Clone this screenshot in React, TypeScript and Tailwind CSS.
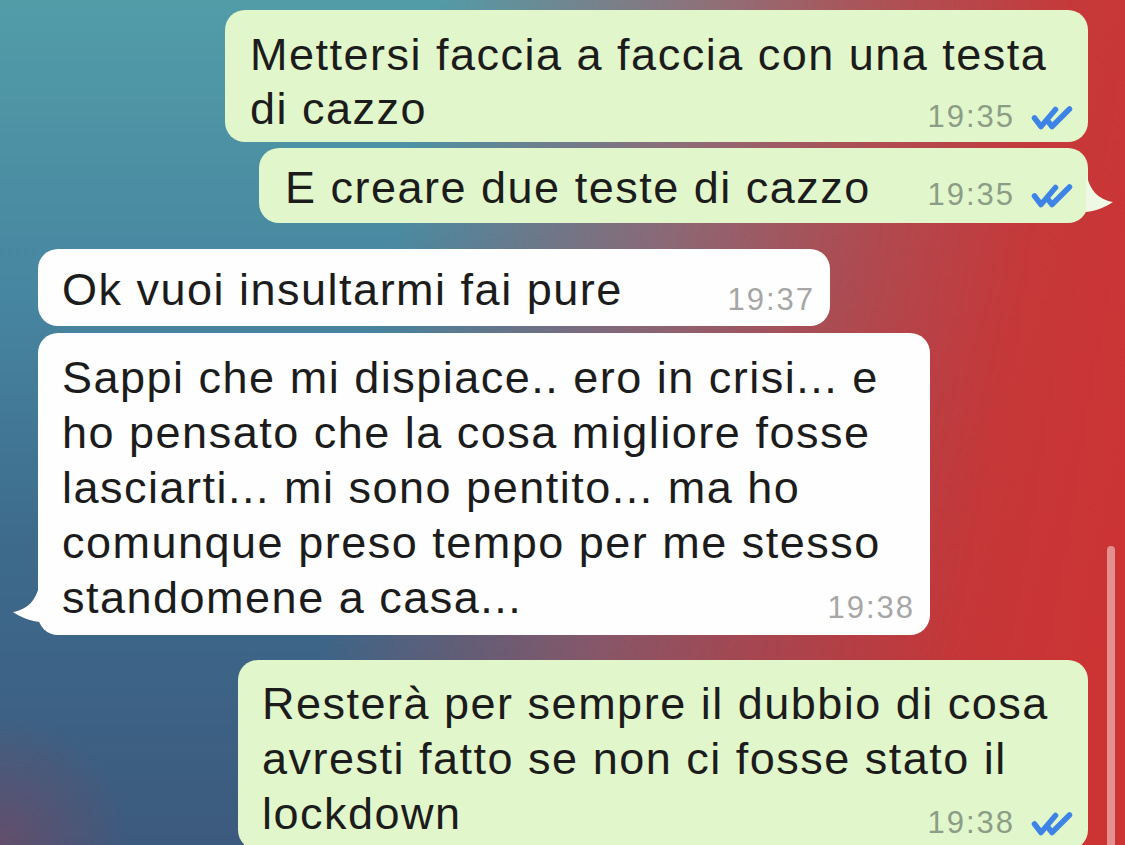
import type { ReactNode } from "react";

const Ticks = () => (
  <svg width="42" height="24" viewBox="0 0 42 24" fill="none" className="ml-[16px] mb-[2px] shrink-0">
    <path d="M3.5 12 L10 20.5 L24.5 3.5" stroke="#3d84e6" strokeWidth="5.5" strokeLinecap="round" strokeLinejoin="round" />
    <path d="M17.5 16 L21 20.5 L38.5 3" stroke="#3d84e6" strokeWidth="5.5" strokeLinecap="round" strokeLinejoin="round" />
  </svg>
);

const Time = ({ t, out }: { t: string; out?: boolean }) => (
  <div className="flex items-end">
    <span
      className={
        out
          ? "text-[31px] leading-[30px] tracking-[2px] text-[#8c9d87]"
          : "text-[31px] leading-[30px] tracking-[2px] text-[#a6a6a6]"
      }
    >
      {t}
    </span>
    {out && <Ticks />}
  </div>
);

const Text = ({ children, lh }: { children: ReactNode; lh?: string }) => (
  <p className={(lh ?? "leading-[55px]") + " whitespace-nowrap text-[45px] tracking-[1.5px]"}>{children}</p>
);

const App = () => {
  return (
    <div className="relative h-[845px] w-[1125px] overflow-hidden font-['Liberation_Sans',Arial,sans-serif] text-[#1c1c1c] bg-[radial-gradient(circle_at_0%_100%,rgba(125,70,95,0.6)_0px,rgba(125,70,95,0)_130px),linear-gradient(100deg,rgba(205,52,52,0)_34%,rgba(195,75,80,0.55)_56%,rgba(200,60,62,0.75)_68%,rgba(204,52,52,0.95)_84%,#cc3434_95%),linear-gradient(to_bottom,#529ca8_0%,#4786a0_35%,#3d6a8b_65%,#3c5a7e_100%)]">
      <div className="flex flex-col pt-[10px]">
        {/* outgoing 1 */}
        <div className="self-end mr-[37px] flex w-[863px] flex-col rounded-[20px] bg-[#e1f6ca] pl-[25px] pr-[15px] pt-[18px] pb-[10px]">
          <Text lh="leading-[54px]">
            Mettersi faccia a faccia con una testa
            <br />
            di cazzo
          </Text>
          <div className="self-end -mt-[34px]">
            <Time t="19:35" out />
          </div>
        </div>

        {/* outgoing 2 */}
        <div className="relative self-end mr-[37px] mt-[6px] flex w-[829px] items-end justify-between rounded-[20px] bg-[#e1f6ca] pl-[26px] pr-[15px] pt-[13px] pb-[8px]">
          <Text lh="leading-[54px]">E creare due teste di cazzo</Text>
          <div className="mb-[5px]">
            <Time t="19:35" out />
          </div>
          <svg width="28" height="40" viewBox="0 0 28 40" className="absolute right-[-26px] bottom-[10px]">
            <path d="M0 0 C4 18 12 26 27 29 C20 34 10 38 0 39 Z" fill="#eef8e4" />
          </svg>
        </div>

        {/* incoming 1 */}
        <div className="self-start ml-[38px] mt-[26px] flex w-[792px] items-end justify-between rounded-[20px] bg-[#fefefe] pl-[24px] pr-[15px] pt-[14px] pb-[9px]">
          <Text lh="leading-[54px]">Ok vuoi insultarmi fai pure</Text>
          <div className="mb-[2px]">
            <Time t="19:37" />
          </div>
        </div>

        {/* incoming 2 */}
        <div className="relative self-start ml-[38px] mt-[7px] flex w-[892px] flex-col rounded-[20px] bg-[#fefefe] pl-[24px] pr-[15px] pt-[17px] pb-[12px]">
          <Text>
            Sappi che mi dispiace.. ero in crisi... e
            <br />
            ho pensato che la cosa migliore fosse
            <br />
            lasciarti... mi sono pentito... ma ho
            <br />
            comunque preso tempo per me stesso
            <br />
            standomene a casa...
          </Text>
          <div className="self-end -mt-[32px]">
            <Time t="19:38" />
          </div>
          <svg width="28" height="40" viewBox="0 0 28 40" className="absolute left-[-26px] bottom-[12px]">
            <path d="M28 0 C24 18 16 26 1 29 C8 34 18 38 28 39 Z" fill="#ffffff" />
          </svg>
        </div>

        {/* outgoing 3 */}
        <div className="self-end mr-[37px] mt-[25px] flex w-[850px] flex-col rounded-[20px] bg-[#e1f6ca] pl-[24px] pr-[15px] pt-[16px] pb-[12px]">
          <Text>
            Resterà per sempre il dubbio di cosa
            <br />
            avresti fatto se non ci fosse stato il
            <br />
            lockdown
          </Text>
          <div className="self-end -mt-[33px]">
            <Time t="19:38" out />
          </div>
        </div>
      </div>

      {/* scroll indicator */}
      <div className="absolute left-[1107px] top-[546px] h-[320px] w-[8px] rounded-full bg-[rgba(255,255,255,0.45)]" />
    </div>
  );
};

export default App;
